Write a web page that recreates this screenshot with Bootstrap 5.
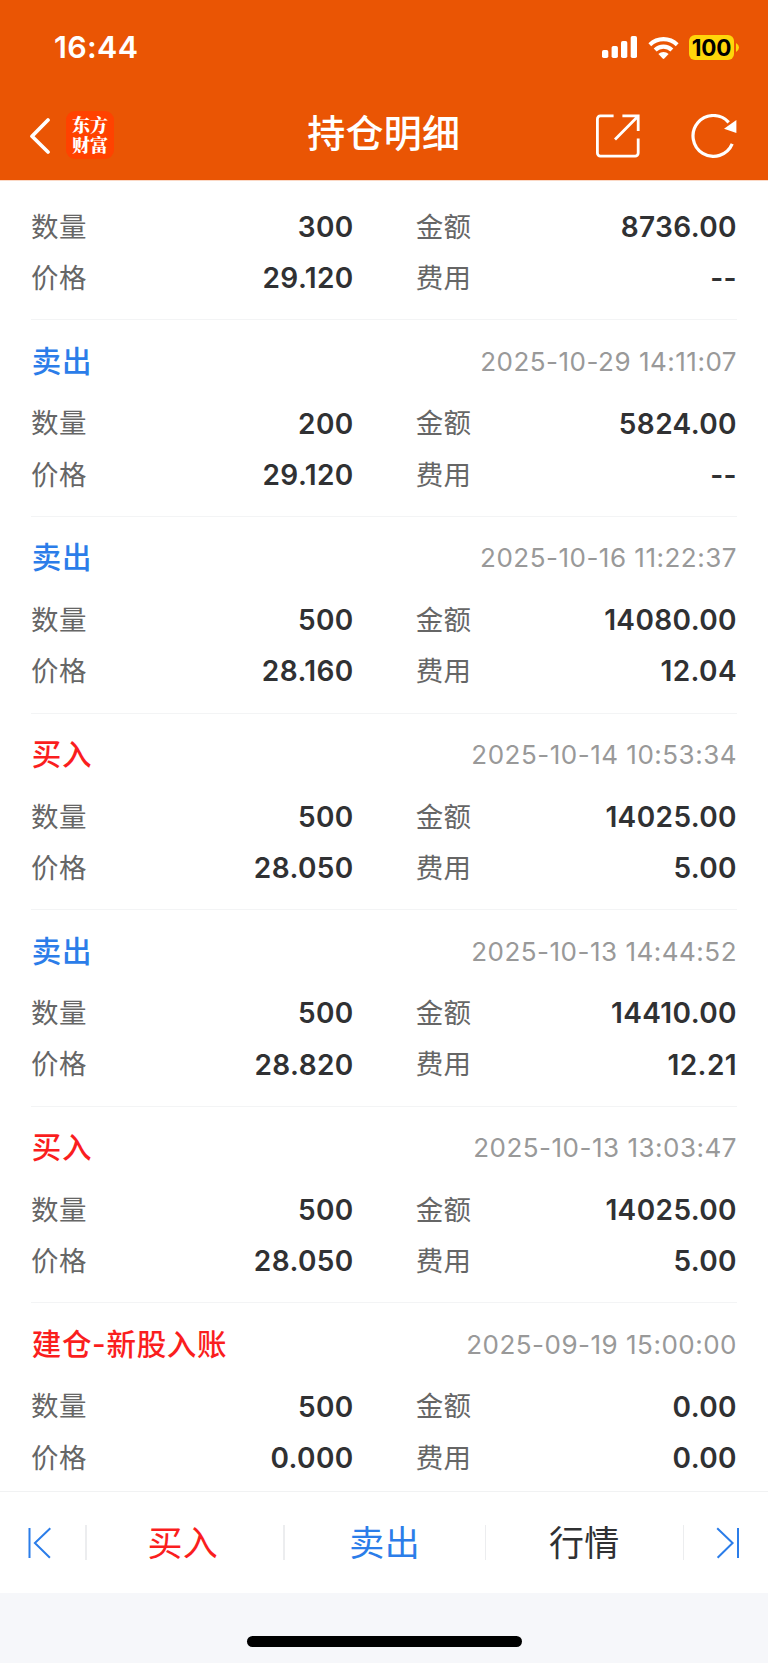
<!DOCTYPE html>
<html lang="zh-CN">
<head>
<meta charset="utf-8">
<meta name="viewport" content="width=device-width, initial-scale=1">
<title>持仓明细</title>
<link href="https://cdn.jsdelivr.net/npm/bootstrap@5.3.0/dist/css/bootstrap.min.css" rel="stylesheet">
<style>
  body { font-family: Inter, "Noto Sans CJK SC", sans-serif; color: #303133; background: #fff; letter-spacing: .4px; }
  svg { display: block; flex: none; }
  .app { height: 1663px; overflow: hidden; }
  .top-area { height: 180px; background: #ea5504; color: #fff; box-shadow: 0 1px 0 #fbd9c6; flex: none; }
  .status { height: 94px; padding: 0 29px 0 54px; }
  .clock { font-size: 30.5px; font-weight: 600; letter-spacing: .3px; line-height: 94px; }
  .signals { gap: 10px; }
  .battery { width: 45px; height: 25px; border-radius: 6px; background: #ffd60a; color: #000; font-size: 22.5px; font-weight: 700; line-height: 25px; letter-spacing: -.1px; }
  .title-row { height: 86px; padding: 0 30.5px 3px 30px; }
  .side { width: 150px; }
  .tools { gap: 51px; }
  .brand-logo { width: 48px; height: 48px; border-radius: 9px; background: #ff4200; font: 900 18px/20.5px "Noto Serif CJK SC", "Noto Sans CJK SC", sans-serif; letter-spacing: 0; margin: 0 0 2px 16px; padding-top: 3px; text-align: center; }
  .page-title { font-size: 38px; font-weight: 500; line-height: 81px; letter-spacing: .3px; padding-bottom: 4px; }
  .entries { padding: 0 31px; height: 1311px; flex: none; }
  .entry { height: 196.6px; border-bottom: 1.5px solid #f3f4f5; padding-top: 15.5px; }
  .entry.partial { height: 140.4px; padding-top: 21px; }
  .entry:last-child { border-bottom: 0; height: 186px; }
  .entry-head { height: 51px; margin-bottom: 11px; }
  .kind { font-size: 29.5px; font-weight: 500; letter-spacing: .7px; padding: 0 0 1px .7px; }
  .sell { color: #2b7de9; }
  .buy { color: #fa1e1e; }
  .stamp { font-size: 26px; color: #999; letter-spacing: .5px; }
  .pairs { display: grid; grid-template-columns: 322.7px 321.3px; justify-content: space-between; }
  .pair { height: 51.3px; }
  .pair dt { font-size: 27.5px; font-weight: 400; color: #666; padding-top: 1px; }
  .pair dd { font-size: 28px; font-weight: 600; margin: 0; letter-spacing: .4px; }
  .actions { height: 102px; border-top: 1.5px solid #f1f2f3; flex: none; }
  .action { font-size: 35px; line-height: 100px; flex: 1; text-align: center; }
  .action.first { flex: 0 0 196.7px; padding-right: 4px; }
  .action.mid { flex: 0 0 200px; }
  .rule { width: 1.5px; height: 35px; background: #ecedef; }
  .edge { width: 85px; flex: none; }
  .home-area { background: #f6f7fa; flex: 1; padding-top: 43px; }
  .home-bar { width: 275px; height: 11px; border-radius: 6px; background: #000; }
</style>
</head>
<body>
<div class="app d-flex flex-column">
  <header class="top-area">
    <div class="status d-flex justify-content-between align-items-center">
      <span class="clock">16:44</span>
      <div class="signals d-flex align-items-center">
        <svg width="36" height="22" viewBox="0 0 36 22" fill="#fff"><rect x="0" y="14" width="6.3" height="8" rx="1.8"/><rect x="9.6" y="10" width="6.3" height="12" rx="1.8"/><rect x="19" y="5" width="6.3" height="17" rx="1.8"/><rect x="28.7" y="0" width="6.3" height="22" rx="1.8"/></svg>
        <svg width="31" height="23" viewBox="0 0 31 23" fill="#fff"><path d="M.4 7.2a21.5 21.5 0 0 1 30.2 0L27.8 10.2a17.6 17.6 0 0 0-24.6 0z"/><path d="M5.7 12.6a14 14 0 0 1 19.6 0l-2.9 2.9a9.9 9.9 0 0 0-13.8 0z"/><path d="M10.4 18a7.2 7.2 0 0 1 10.2 0l-4.3 4.6q-.8.8-1.6 0z"/></svg>
        <div class="d-flex align-items-center">
          <div class="battery text-center">100</div>
          <svg width="5" height="9" viewBox="0 0 5 9"><path d="M2 0q3 1.7 3 4.5T2 9z" fill="#ffd60a"/></svg>
        </div>
      </div>
    </div>
    <div class="title-row d-flex justify-content-between align-items-center">
      <div class="side d-flex align-items-center">
        <svg width="20" height="36" viewBox="0 0 20 36" fill="none" stroke="#fff" stroke-width="3.7" stroke-linecap="round" stroke-linejoin="round"><path d="M18 2 2 18.3 18 34"/></svg>
        <div class="brand-logo">东方<br>财富</div>
      </div>
      <h1 class="page-title m-0">持仓明细</h1>
      <div class="side tools d-flex align-items-center justify-content-end">
        <svg width="44" height="44" viewBox="0 0 44 44" fill="none" stroke="#fff" stroke-width="2.8"><path d="M17.6 1.9H4.4a3 3 0 0 0-3 3v34.2a3 3 0 0 0 3 3h34.8a3 3 0 0 0 3-3V24.6"/><path d="M26.4 1.9h15.8v15M42 2.2 19 25.5"/></svg>
        <svg width="46" height="44" viewBox="0 0 46 44"><path d="M41.2 29.9A20.4 20.4 0 1 1 37.7 8.4" fill="none" stroke="#fff" stroke-width="3.2"/><path d="M45.4 6v13L33 14.7z" fill="#fff"/></svg>
      </div>
    </div>
  </header>

  <main class="entries">
    <section class="entry partial">
      <dl class="pairs m-0">
        <div class="pair d-flex justify-content-between align-items-center"><dt>数量</dt><dd>300</dd></div>
        <div class="pair d-flex justify-content-between align-items-center"><dt>金额</dt><dd>8736.00</dd></div>
        <div class="pair d-flex justify-content-between align-items-center"><dt>价格</dt><dd>29.120</dd></div>
        <div class="pair d-flex justify-content-between align-items-center"><dt>费用</dt><dd>--</dd></div>
      </dl>
    </section>
    <section class="entry">
      <div class="entry-head d-flex justify-content-between align-items-center"><span class="kind sell">卖出</span><time class="stamp">2025-10-29 14:11:07</time></div>
      <dl class="pairs m-0">
        <div class="pair d-flex justify-content-between align-items-center"><dt>数量</dt><dd>200</dd></div>
        <div class="pair d-flex justify-content-between align-items-center"><dt>金额</dt><dd>5824.00</dd></div>
        <div class="pair d-flex justify-content-between align-items-center"><dt>价格</dt><dd>29.120</dd></div>
        <div class="pair d-flex justify-content-between align-items-center"><dt>费用</dt><dd>--</dd></div>
      </dl>
    </section>
    <section class="entry">
      <div class="entry-head d-flex justify-content-between align-items-center"><span class="kind sell">卖出</span><time class="stamp">2025-10-16 11:22:37</time></div>
      <dl class="pairs m-0">
        <div class="pair d-flex justify-content-between align-items-center"><dt>数量</dt><dd>500</dd></div>
        <div class="pair d-flex justify-content-between align-items-center"><dt>金额</dt><dd>14080.00</dd></div>
        <div class="pair d-flex justify-content-between align-items-center"><dt>价格</dt><dd>28.160</dd></div>
        <div class="pair d-flex justify-content-between align-items-center"><dt>费用</dt><dd>12.04</dd></div>
      </dl>
    </section>
    <section class="entry">
      <div class="entry-head d-flex justify-content-between align-items-center"><span class="kind buy">买入</span><time class="stamp">2025-10-14 10:53:34</time></div>
      <dl class="pairs m-0">
        <div class="pair d-flex justify-content-between align-items-center"><dt>数量</dt><dd>500</dd></div>
        <div class="pair d-flex justify-content-between align-items-center"><dt>金额</dt><dd>14025.00</dd></div>
        <div class="pair d-flex justify-content-between align-items-center"><dt>价格</dt><dd>28.050</dd></div>
        <div class="pair d-flex justify-content-between align-items-center"><dt>费用</dt><dd>5.00</dd></div>
      </dl>
    </section>
    <section class="entry">
      <div class="entry-head d-flex justify-content-between align-items-center"><span class="kind sell">卖出</span><time class="stamp">2025-10-13 14:44:52</time></div>
      <dl class="pairs m-0">
        <div class="pair d-flex justify-content-between align-items-center"><dt>数量</dt><dd>500</dd></div>
        <div class="pair d-flex justify-content-between align-items-center"><dt>金额</dt><dd>14410.00</dd></div>
        <div class="pair d-flex justify-content-between align-items-center"><dt>价格</dt><dd>28.820</dd></div>
        <div class="pair d-flex justify-content-between align-items-center"><dt>费用</dt><dd>12.21</dd></div>
      </dl>
    </section>
    <section class="entry">
      <div class="entry-head d-flex justify-content-between align-items-center"><span class="kind buy">买入</span><time class="stamp">2025-10-13 13:03:47</time></div>
      <dl class="pairs m-0">
        <div class="pair d-flex justify-content-between align-items-center"><dt>数量</dt><dd>500</dd></div>
        <div class="pair d-flex justify-content-between align-items-center"><dt>金额</dt><dd>14025.00</dd></div>
        <div class="pair d-flex justify-content-between align-items-center"><dt>价格</dt><dd>28.050</dd></div>
        <div class="pair d-flex justify-content-between align-items-center"><dt>费用</dt><dd>5.00</dd></div>
      </dl>
    </section>
    <section class="entry">
      <div class="entry-head d-flex justify-content-between align-items-center"><span class="kind buy">建仓-新股入账</span><time class="stamp">2025-09-19 15:00:00</time></div>
      <dl class="pairs m-0">
        <div class="pair d-flex justify-content-between align-items-center"><dt>数量</dt><dd>500</dd></div>
        <div class="pair d-flex justify-content-between align-items-center"><dt>金额</dt><dd>0.00</dd></div>
        <div class="pair d-flex justify-content-between align-items-center"><dt>价格</dt><dd>0.000</dd></div>
        <div class="pair d-flex justify-content-between align-items-center"><dt>费用</dt><dd>0.00</dd></div>
      </dl>
    </section>
  </main>

  <nav class="actions d-flex align-items-center">
    <div class="edge d-flex" style="padding-left:27px"><svg width="24" height="32" viewBox="0 0 24 32" fill="none" stroke="#2b7de9" stroke-width="2"><path d="M2.5 1v30M23.3 1.2 7.9 16l15 14.8"/></svg></div>
    <span class="rule"></span>
    <div class="action first buy">买入</div>
    <span class="rule"></span>
    <div class="action mid sell">卖出</div>
    <span class="rule"></span>
    <div class="action">行情</div>
    <span class="rule"></span>
    <div class="edge d-flex justify-content-end" style="padding-right:28px;width:84px"><svg width="24" height="32" viewBox="0 0 24 32" fill="none" stroke="#2b7de9" stroke-width="2"><path d="M22 1v30M1.2 1.2 16.6 16l-15 14.8"/></svg></div>
  </nav>
  <footer class="home-area"><div class="home-bar mx-auto"></div></footer>
</div>
<script src="https://cdn.jsdelivr.net/npm/bootstrap@5.3.0/dist/js/bootstrap.bundle.min.js"></script>
</body>
</html>
